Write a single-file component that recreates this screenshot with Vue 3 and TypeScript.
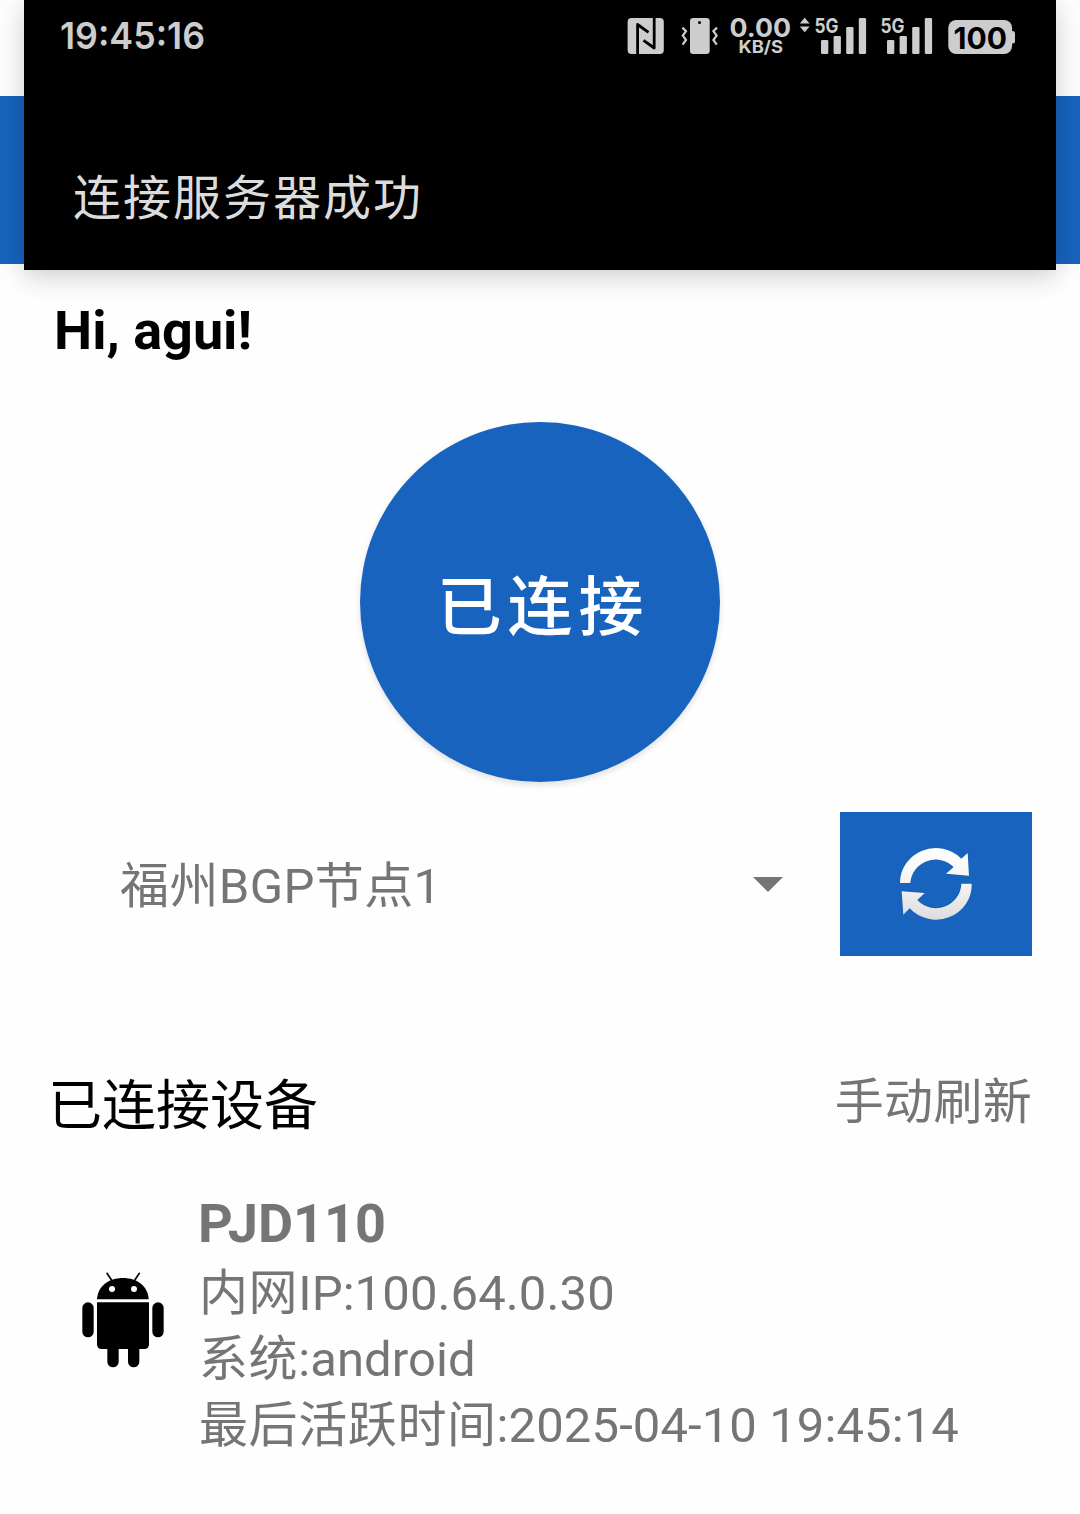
<script setup lang="ts">
interface Detail {
  label: string
  value: string
}

interface Device {
  name: string
  details: Detail[]
}

interface Bar {
  x: number
  y: number
}

const blue = '#1763be'
const toastText = '连接服务器成功'
const userName = 'agui'
const node = '福州BGP节点1'

const devices: Device[] = [
  {
    name: 'PJD110',
    details: [
      { label: '内网', value: 'IP:100.64.0.30' },
      { label: '系统', value: ':android' },
      { label: '最后活跃时间', value: ':2025-04-10 19:45:14' },
    ],
  },
]

const signalBars = (start: number): Bar[] =>
  [40, 36, 27, 18].map((y, i) => ({ x: start + i * 12.6, y }))

const bars: Bar[] = [...signalBars(821), ...signalBars(887)]
</script>

<template>
  <div class="screen" :style="{ '--blue': blue }">
    <header class="app-bar"></header>

    <main class="content">
      <h1 class="greeting">Hi, {{ userName }}!</h1>

      <button class="connect" type="button"><span>已连接</span></button>

      <div class="node-row">
        <div class="node-select">
          <span>{{ node }}</span>
          <svg width="30" height="15" viewBox="0 0 30 15"><path d="M0 0H30L15 15Z" fill="#757575" /></svg>
        </div>
        <button class="refresh" type="button" aria-label="refresh">
          <svg width="192" height="144" viewBox="60 37 576 432">
            <defs>
              <linearGradient id="silver" x1="0" y1="146" x2="0" y2="357" gradientUnits="userSpaceOnUse">
                <stop offset="0" stop-color="#fff" />
                <stop offset=".5" stop-color="#f4f4f4" />
                <stop offset="1" stop-color="#dedede" />
              </linearGradient>
            </defs>
            <g fill="url(#silver)" stroke="#24508c" stroke-opacity=".3" stroke-width="3" paint-order="stroke">
              <path d="M240 250A107 104 0 0 1 424 177L443 160L447 228L378 222L401 202A76 75 0 0 0 271 250Z" />
              <path d="M455 252A107 104 0 0 1 269 326L250 345L245 275L314 280L292 301A76 75 0 0 0 424 252Z" />
            </g>
          </svg>
        </button>
      </div>

      <div class="section-head">
        <h2>已连接设备</h2>
        <span class="manual">手动刷新</span>
      </div>

      <section v-for="device in devices" :key="device.name" class="device">
        <svg class="robot" width="82" height="96" viewBox="66 65 246 288">
          <g stroke="#000" stroke-width="5" stroke-linecap="round">
            <path d="M141 69L158 94M238 69L221 94" />
          </g>
          <path d="M111 147C113 108 146 83 189 83S264 108 266 147Z" />
          <path d="M111 156H267V282Q267 296 253 296H238V334A17 17 0 0 1 204 334V296H176V334A17 17 0 0 1 142 334V296H125Q111 296 111 282Z" />
          <rect x="67" y="156" width="34" height="105" rx="17" />
          <rect x="277" y="156" width="34" height="105" rx="17" />
          <circle cx="156" cy="116" r="9" fill="#fff" />
          <circle cx="222" cy="116" r="9" fill="#fff" />
        </svg>
        <div class="info">
          <h3>{{ device.name }}</h3>
          <p v-for="line in device.details" :key="line.label"><span class="label">{{ line.label }}</span>{{ line.value }}</p>
        </div>
      </section>
    </main>

    <div class="toast">
      <div class="status">
        <svg width="1032" height="80" viewBox="24 0 1032 80" fill="#cdcdcd" font-family="Inter, sans-serif" font-weight="700">
          <text x="60" y="49" font-size="37" font-weight="600" textLength="145" lengthAdjust="spacingAndGlyphs">19:45:16</text>

          <!-- NFC -->
          <rect x="627.6" y="18" width="36.2" height="36" rx="4" />
          <path d="M637.6 54V24.5L648.5 32.3M654.2 18V48L643.5 40.3" fill="none" stroke="#000" stroke-width="2.8" stroke-linejoin="round" />

          <!-- vibrate -->
          <rect x="690" y="18" width="19.7" height="36" rx="3.2" />
          <circle cx="699.5" cy="22.4" r="1.5" fill="#000" />
          <path d="M682.4 27.6L686 31.2L682.8 35.6L686 40L682.6 44.6M717 27.6L713.4 31.2L716.6 35.6L713.4 40L716.8 44.6" fill="none" stroke="#cdcdcd" stroke-width="2.2" />

          <!-- network speed -->
          <text x="729.5" y="36.6" font-size="26" textLength="61.5" lengthAdjust="spacingAndGlyphs">0.00</text>
          <text x="738.5" y="52.6" font-size="17" textLength="44.5" lengthAdjust="spacingAndGlyphs">KB/S</text>
          <path d="M804.7 17.8L809.6 23.4H799.8Z M804.7 32.2L809.6 26.6H799.8Z" />

          <!-- mobile signal -->
          <g font-size="20">
            <text x="814.5" y="32.7" textLength="24" lengthAdjust="spacingAndGlyphs">5G</text>
            <text x="880.5" y="32.7" textLength="24" lengthAdjust="spacingAndGlyphs">5G</text>
          </g>
          <rect v-for="bar in bars" :key="bar.x" :x="bar.x" :y="bar.y" width="7.3" :height="54 - bar.y" rx="1.3" />

          <!-- battery -->
          <rect x="948.3" y="20" width="63.8" height="34" rx="8" />
          <rect x="1008" y="31" width="7" height="12.5" rx="2.5" />
          <text x="953.5" y="48.7" font-size="30" textLength="53.5" lengthAdjust="spacingAndGlyphs" fill="#000">100</text>
        </svg>
      </div>
      <p class="message">{{ toastText }}</p>
    </div>
  </div>
</template>

<style>
body {
  margin: 0;
  background: #fefefe;
}
</style>

<style scoped>
.screen {
  position: relative;
  width: 1080px;
  height: 1514px;
  overflow: hidden;
  background: #fefefe;
  color: #757575;
  font-family: Roboto, 'Noto Sans CJK SC', sans-serif;
  font-size: 49px;
  line-height: 66px;
}

h1,
h2,
h3,
p {
  margin: 0;
}

svg {
  display: block;
}

button {
  padding: 0;
  border: 0;
  background: var(--blue);
  color: #fff;
  font-family: inherit;
}

.app-bar {
  height: 168px;
  border-top: 96px solid #fefefe;
  background: var(--blue);
}

.content {
  display: flex;
  flex-direction: column;
  padding: 35px 48px 0;
}

.greeting {
  padding-left: 6px;
  color: #000;
  font-size: 54px;
  font-weight: 700;
  line-height: 64px;
}

.connect {
  display: flex;
  align-items: center;
  justify-content: center;
  align-self: center;
  width: 360px;
  height: 360px;
  margin-top: 59px;
  border-radius: 50%;
  box-shadow: 0 3px 6px rgba(0, 0, 0, 0.12);
  font-size: 65px;
  font-weight: 500;
  line-height: 80px;
  letter-spacing: 5.8px;
}

.connect span {
  padding: 11px 0 0 6px;
}

.node-row {
  display: flex;
  justify-content: space-between;
  margin-top: 30px;
}

.node-select {
  display: flex;
  align-items: center;
  justify-content: space-between;
  width: 663px;
  height: 144px;
  padding-left: 72px;
  letter-spacing: 0.4px;
}

.node-select span {
  padding-top: 6px;
}

.refresh {
  width: 192px;
  height: 144px;
}

.section-head {
  display: flex;
  justify-content: space-between;
  height: 69px;
  margin-top: 110px;
}

.section-head h2 {
  padding-top: 8px;
  color: #000;
  font-size: 54px;
  font-weight: 400;
}

.manual {
  padding-top: 4px;
  letter-spacing: 0.3px;
}

.device {
  display: flex;
  align-items: center;
  gap: 34px;
  margin-top: 56px;
  padding-left: 34px;
}

.robot {
  margin-bottom: 10px;
}

.info h3 {
  margin-bottom: 4px;
  font-size: 54px;
  font-weight: 700;
}

.info p {
  padding-left: 1px;
  letter-spacing: 0.1px;
}

.info .label {
  letter-spacing: 0.6px;
}

.toast {
  position: absolute;
  top: 0;
  left: 24px;
  width: 1032px;
  height: 270px;
  background: #000;
  box-shadow: 0 6px 26px rgba(0, 0, 0, 0.2);
  color: #dcdcdc;
}

.message {
  padding: 86px 49px 0;
  font-size: 48px;
  letter-spacing: 2px;
}
</style>
